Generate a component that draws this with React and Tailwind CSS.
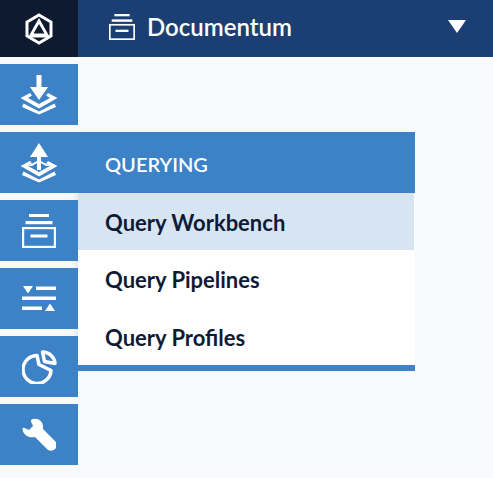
const Logo = () => (
  <svg width="28" height="32" viewBox="0 0 28 32" fill="none">
    <path d="M14 2 L26 9 V23 L14 30 L2 23 V9 Z" stroke="#fff" strokeWidth="3" />
    <path d="M14 5 L3 24.5 H25 Z M14 11 L19.5 20.5 H8.5 Z" fill="#fff" fillRule="evenodd" />
  </svg>
);

const Layers = ({ up }) => (
  <svg width="38" height="40" viewBox="0 0 38 40" fill="none">
    <path d="M0.5 23 L10 18 L12 20.5 L8 23 L19 29 L30 23 L26 20.5 L28 18 L37.5 23 L19 33.5 Z" fill="#fff" />
    <path d="M3.5 29 L19 37 L34.5 29 L36 32.5 L19 40 L2 32.5 Z" fill="#fff" transform="translate(0 -0.5)" />
    {up ? (
      <>
        <path d="M19 0 L28 14 H10 Z" fill="#fff" />
        <rect x="17" y="13" width="4" height="14" fill="#fff" />
        <path d="M8 23 L17 18 V20 L12 23 Z M30 23 L21 18 V20 L26 23 Z" fill="#fff" />
      </>
    ) : (
      <>
        <rect x="16.5" y="0" width="5" height="14" fill="#fff" />
        <path d="M10 12 H28 L19 25 Z" fill="#fff" />
      </>
    )}
  </svg>
);

const Archive = ({ w = 34, h = 34 }) => (
  <svg width={w} height={h} viewBox="0 0 34 34" fill="none">
    <rect x="7" y="0" width="20" height="3" fill="#fff" />
    <rect x="3.5" y="7" width="27" height="3.2" fill="#fff" />
    <rect x="1.1" y="14.1" width="31.8" height="18.8" stroke="#fff" strokeWidth="2.2" />
    <rect x="8.5" y="20.5" width="17" height="3" fill="#fff" />
  </svg>
);

const Sliders = () => (
  <svg width="34" height="26" viewBox="0 0 34 26" fill="none">
    <path d="M1 0 H11 L6 7.5 Z" fill="#fff" />
    <rect x="14" y="0.5" width="20" height="3.5" fill="#fff" />
    <rect x="0" y="10.5" width="34" height="3.5" fill="#fff" />
    <rect x="0" y="20.5" width="20" height="3.5" fill="#fff" />
    <path d="M23 25 H33 L28 17.5 Z" fill="#fff" />
  </svg>
);

const Pie = () => (
  <svg width="35" height="34" viewBox="0 0 35 34" fill="none">
    <path d="M15 5.5 A14 14 0 1 0 29 20.5 L17 14.5 Z" stroke="#fff" strokeWidth="3.5" strokeLinejoin="round" />
    <path d="M20.5 2 A12.5 12.5 0 0 1 33 13.5 L22.5 11.5 Z" stroke="#fff" strokeWidth="3.5" strokeLinejoin="round" />
  </svg>
);

const Wrench = () => (
  <svg width="34" height="34" viewBox="0 0 34 34" fill="none">
    <path d="M11 1 C17 0 22 4 21 11 L33 23 C35.5 25.5 35 29 33 31 C30.5 33.5 27 33 25 31 L13 19 C7 20.5 1 17 0.5 11 C0.5 10 1.5 9.5 2.5 10 L7 12 L11 8 L9 3.5 C8.7 2.5 9.5 1.2 11 1 Z" fill="#fff" />
  </svg>
);

const RailItem = ({ children }) => (
  <div className="flex h-[61px] w-[78px] items-center justify-center bg-[#3d81c7]">{children}</div>
);

const MenuItem = ({ children, active }) => (
  <div className={`flex h-[57.33px] items-center pl-[27px] pt-[2px] text-[22px] font-bold text-[#0f1b35] ${active ? "mr-px bg-[#d7e4f1]" : ""}`}>
    {children}
  </div>
);

export default function App() {
  return (
    <div className="relative h-[478px] w-[493px] overflow-hidden bg-[#f8f9fb] font-['Lato',sans-serif]">
      <header className="flex h-[57px] items-center bg-[#1b3f73]">
        <div className="flex h-full w-[78px] items-center justify-center bg-[#0e1a2f]">
          <Logo />
        </div>
        <div className="ml-[31px] flex flex-1 items-center gap-[12px] pr-[27px] pb-[4px]">
          <Archive w={26} h={26} />
          <span className="text-[24px] font-semibold text-white">Documentum</span>
          <svg className="ml-auto" width="18" height="13" viewBox="0 0 18 13">
            <path d="M0 0 H18 L9 13 Z" fill="#fff" />
          </svg>
        </div>
      </header>
      <nav className="relative z-10 mt-[7px] flex w-[78px] flex-col gap-[7px]">
        <RailItem><Layers /></RailItem>
        <RailItem><Layers up /></RailItem>
        <RailItem><Archive /></RailItem>
        <RailItem><Sliders /></RailItem>
        <RailItem><Pie /></RailItem>
        <RailItem><Wrench /></RailItem>
      </nav>
      <div className="absolute left-[78px] top-[132px] w-[337px] border-b-[6px] border-[#3d81c7] bg-white shadow-[-6px_0_6px_-3px_rgba(0,0,0,0.07)]">
        <div className="flex h-[61px] items-center bg-[#3d81c7] pl-[27px] pt-[3px] text-[20px] font-semibold text-white">QUERYING</div>
        <MenuItem active>Query Workbench</MenuItem>
        <MenuItem>Query Pipelines</MenuItem>
        <MenuItem>Query Profiles</MenuItem>
      </div>
    </div>
  );
}
